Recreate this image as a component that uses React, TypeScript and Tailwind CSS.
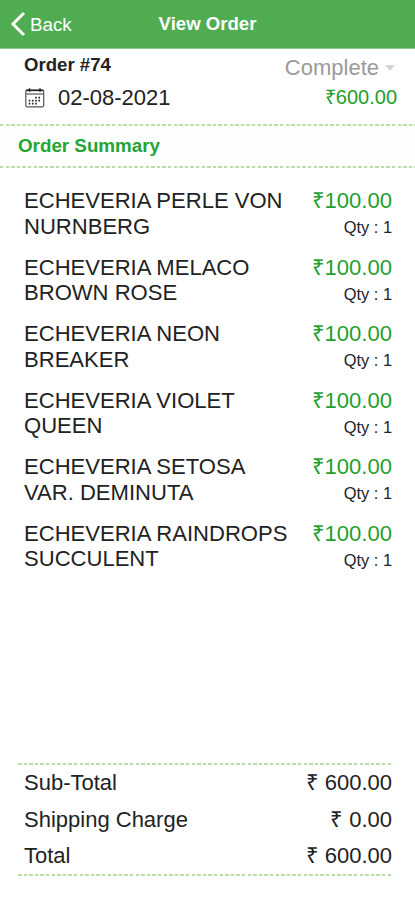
import type { ReactNode } from "react";

const items = [
  ["ECHEVERIA PERLE VON", "NURNBERG"],
  ["ECHEVERIA MELACO", "BROWN ROSE"],
  ["ECHEVERIA NEON", "BREAKER"],
  ["ECHEVERIA VIOLET", "QUEEN"],
  ["ECHEVERIA SETOSA", "VAR. DEMINUTA"],
  ["ECHEVERIA RAINDROPS", "SUCCULENT"],
];

const totals = [
  { label: "Sub-Total", value: "₹ 600.00" },
  { label: "Shipping Charge", value: "₹ 0.00" },
  { label: "Total", value: "₹ 600.00" },
];

function DashedLine() {
  return (
    <div className="h-[2px] w-full shrink-0 bg-[repeating-linear-gradient(90deg,#bcddab_0px,#bcddab_3.5px,#f8fcf6_3.5px,#f8fcf6_5.6px)]" />
  );
}

function CalendarIcon() {
  return (
    <svg className="ml-px" width="20" height="20" viewBox="0 0 20 20" fill="none" stroke="#555" strokeWidth="1.2">
      <rect x="0.8" y="2.2" width="17.9" height="16.6" rx="1.2" />
      <path d="M1 2.4h17.5" stroke="#222" strokeWidth="1.5" />
      <path d="M1 6h17.5" />
      <path d="M4.5 0.3v3.4M15 0.3v3.4" stroke="#222" strokeWidth="1.5" />
      <path
        d="M10.2 9.6h5.6M3.7 12.6h12.1M3.7 15.6h9"
        stroke="#222"
        strokeWidth="1.7"
        strokeDasharray="1.6 1.65"
      />
    </svg>
  );
}

function Price({ children }: { children: ReactNode }) {
  return <span className="text-[#1fa02b]">{children}</span>;
}

export default function App() {
  return (
    <main className="flex h-[900px] w-[415px] flex-col overflow-hidden bg-white font-['Liberation_Sans',Arial,sans-serif] text-[#222]">
      {/* Header */}
      <header className="grid h-[49px] shrink-0 grid-cols-[1fr_auto_1fr] items-center border-b border-[#8bc98d] bg-[#4fac50] text-white">
        <div className="flex items-center pl-[10px]">
          <svg width="16" height="26" viewBox="0 0 16 26" fill="none" stroke="currentColor" strokeWidth="3">
            <path d="M14 2 3 13l11 11" />
          </svg>
          <span className="ml-[4px] mt-px text-[18.8px] leading-6">Back</span>
        </div>
        <h1 className="text-[18.6px] font-bold leading-6">View Order</h1>
      </header>

      {/* Order details */}
      <section className="flex h-[75px] shrink-0 justify-between pl-6 pr-[18px]">
        <div className="flex flex-col">
          <span className="mt-[5px] text-[18.6px] font-bold leading-[22px]">Order #74</span>
          <div className="mt-[10px] flex items-center gap-[13px] text-[22px] leading-6">
            <CalendarIcon />
            <span>02-08-2021</span>
          </div>
        </div>
        <div className="flex flex-col items-end">
          <div className="mt-[7px] flex items-center gap-[6px] text-[22px] leading-6 text-[#9a9a9a]">
            <span>Complete</span>
            <svg className="mr-[2px]" width="10" height="6" viewBox="0 0 10 6" fill="#d4d4d4">
              <path d="M0 0h10L5 6z" />
            </svg>
          </div>
          <span className="mt-[5px] text-[20px] leading-6">
            <Price>₹600.00</Price>
          </span>
        </div>
      </section>

      <DashedLine />
      <div className="flex h-[40px] shrink-0 items-center bg-[#fcfffc] pb-px pl-[18px]">
        <h2 className="text-[18.8px] font-bold leading-6 text-[#24a435]">Order Summary</h2>
      </div>
      <DashedLine />

      {/* Items */}
      <ul className="flex flex-col gap-[15.5px] pl-6 pr-[23px] pt-[20.4px] text-[22.05px] leading-[25.5px]">
        {items.map(([first, second]) => (
          <li key={first} className="flex justify-between">
            <div className="whitespace-nowrap">
              {first}
              <br />
              {second}
            </div>
            <div className="flex flex-col items-end">
              <Price>₹100.00</Price>
              <span className="mt-[2.5px] text-[16.4px] leading-[23px]">Qty : 1</span>
            </div>
          </li>
        ))}
      </ul>

      {/* Totals */}
      <section className="mb-[24px] ml-[18px] mr-[22px] mt-auto">
        <DashedLine />
        <dl className="flex h-[109px] flex-col pl-[6px] text-[22px] leading-[36.5px]">
          {totals.map((row) => (
            <div key={row.label} className="flex justify-between pr-px">
              <dt>{row.label}</dt>
              <dd>{row.value}</dd>
            </div>
          ))}
        </dl>
        <DashedLine />
      </section>
    </main>
  );
}
